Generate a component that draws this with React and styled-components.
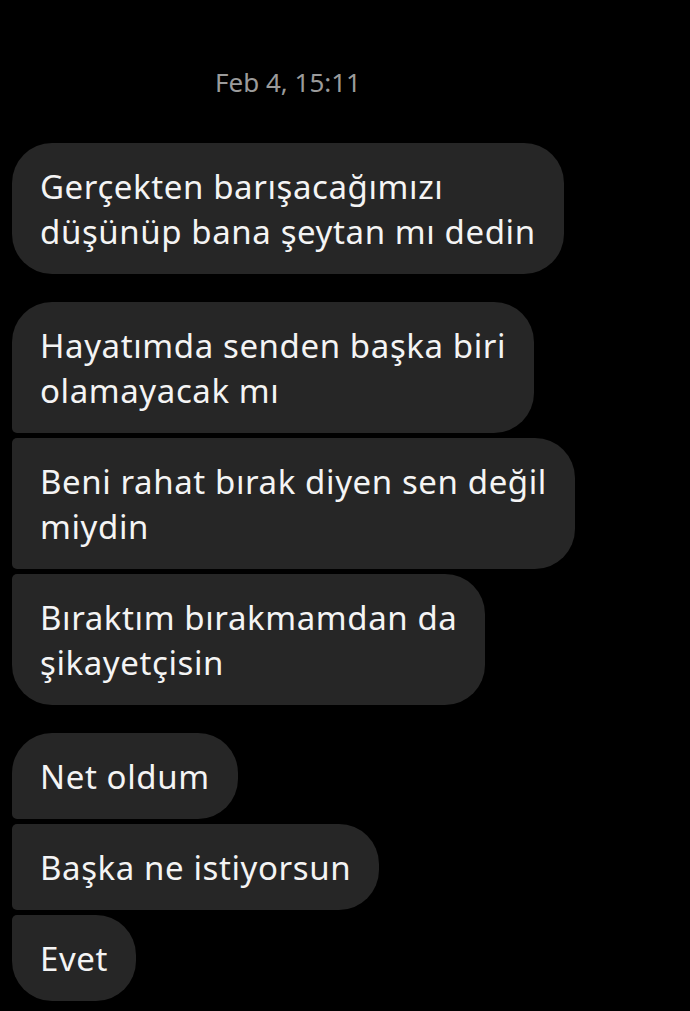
import React from "react";
import styled, { createGlobalStyle, css } from "styled-components";

const Global = createGlobalStyle`
  html, body {
    margin: 0;
    padding: 0;
    background: #000;
  }
  body {
    font-family: "Noto Sans", "Open Sans", sans-serif;
  }
`;

const Screen = styled.div`
  width: 690px;
  height: 1011px;
  background: #000;
  overflow: hidden;
  display: flex;
  flex-direction: column;
`;

const Stamp = styled.div`
  align-self: flex-start;
  width: 576px;
  margin-top: 64px;
  text-align: center;
  font-size: 26px;
  line-height: 36px;
  color: #9b9b9b;
`;

const Thread = styled.div`
  display: flex;
  flex-direction: column;
  align-items: flex-start;
  padding: 43px 0 0 12px;
`;

const Group = styled.div`
  display: flex;
  flex-direction: column;
  align-items: flex-start;
  gap: 5px;
  & + & {
    margin-top: 28px;
  }
`;

const big = "40px";
const small = "5px";

const Bubble = styled.div`
  background: #262626;
  color: #f4f4f4;
  font-size: 33px;
  letter-spacing: 0.6px;
  line-height: 45px;
  padding: 20.5px 28px;
  white-space: nowrap;
  border-radius: ${big};
  ${p =>
    p.$pos === "first" &&
    css`
      border-bottom-left-radius: ${small};
    `}
  ${p =>
    p.$pos === "mid" &&
    css`
      border-top-left-radius: ${small};
      border-bottom-left-radius: ${small};
    `}
  ${p =>
    p.$pos === "last" &&
    css`
      border-top-left-radius: ${small};
    `}
`;

const groups = [
  [["Gerçekten barışacağımızı", "düşünüp bana şeytan mı dedin"]],
  [
    ["Hayatımda senden başka biri", "olamayacak mı"],
    ["Beni rahat bırak diyen sen değil", "miydin"],
    ["Bıraktım bırakmamdan da", "şikayetçisin"],
  ],
  [["Net oldum"], ["Başka ne istiyorsun"], ["Evet"]],
];

function position(i, n) {
  if (n === 1) return "single";
  if (i === 0) return "first";
  if (i === n - 1) return "last";
  return "mid";
}

export default function App() {
  return (
    <Screen>
      <Global />
      <Stamp>Feb 4, 15:11</Stamp>
      <Thread>
        {groups.map((g, gi) => (
          <Group key={gi}>
            {g.map((lines, i) => (
              <Bubble key={i} $pos={position(i, g.length)}>
                {lines.map((l, li) => (
                  <div key={li}>{l}</div>
                ))}
              </Bubble>
            ))}
          </Group>
        ))}
      </Thread>
    </Screen>
  );
}
